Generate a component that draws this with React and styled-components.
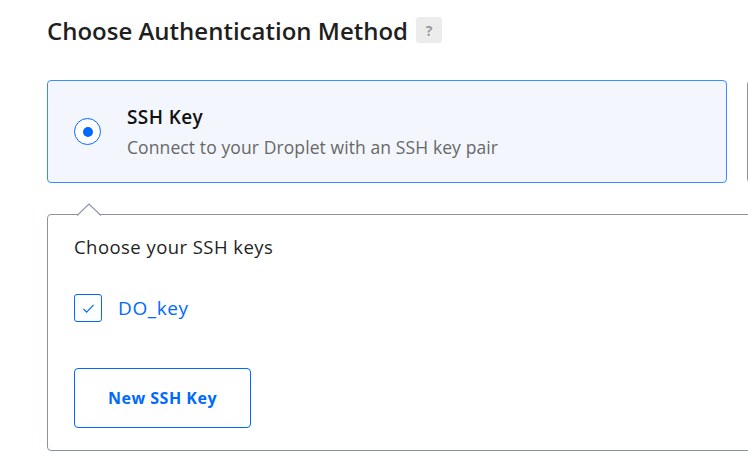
import React from 'react';
import styled, { createGlobalStyle } from 'styled-components';

const GlobalStyle = createGlobalStyle`
  html, body {
    margin: 0;
    padding: 0;
    background: #ffffff;
    overflow: hidden;
  }
  body {
    font-family: "Open Sans", Lato, sans-serif;
    color: #222222;
  }
`;

const Page = styled.div`
  width: 748px;
  height: 469px;
  overflow: hidden;
  padding: 16px 0 0 47px;
  box-sizing: border-box;
`;

const Header = styled.div`
  display: flex;
  align-items: center;
  gap: 8px;
  height: 28px;
`;

const Title = styled.h2`
  margin: 0;
  font-size: 24px;
  font-weight: 600;
  color: #1f1f1f;
`;

const HelpBadge = styled.span`
  display: inline-flex;
  align-items: center;
  justify-content: center;
  width: 26px;
  height: 26px;
  border-radius: 3px;
  background: #ececec;
  color: #9a9a9a;
  font-size: 14px;
  font-weight: 700;
`;

const MethodRow = styled.div`
  display: flex;
  gap: 20px;
  margin-top: 36px;
  width: 1400px;
`;

const MethodCard = styled.div`
  box-sizing: border-box;
  flex: 0 0 ${(p) => p.$width}px;
  height: 103px;
  border: 1px solid ${(p) => (p.$selected ? '#3a8dff' : '#8a93a6')};
  border-radius: 4px;
  background: ${(p) => (p.$selected ? '#f3f7fd' : '#ffffff')};
  display: flex;
  align-items: center;
  padding-left: 26px;
  gap: 26px;
`;

const Radio = styled.span`
  box-sizing: border-box;
  width: 27px;
  height: 27px;
  border-radius: 50%;
  border: 1.5px solid #0069ff;
  display: flex;
  align-items: center;
  justify-content: center;
  background: #ffffff;
  &::after {
    content: '';
    width: 10px;
    height: 10px;
    border-radius: 50%;
    background: #0069ff;
  }
`;

const MethodText = styled.div`
  display: flex;
  flex-direction: column;
  gap: 6px;
`;

const MethodName = styled.div`
  font-size: 19px;
  line-height: 24px;
  font-weight: 600;
  letter-spacing: 0.4px;
  color: #111111;
`;

const MethodDesc = styled.div`
  font-size: 17.5px;
  line-height: 24px;
  letter-spacing: 0.1px;
  color: #676767;
`;

const Panel = styled.div`
  position: relative;
  box-sizing: border-box;
  margin-top: 31px;
  width: 1400px;
  height: 237px;
  border: 1px solid #8a93a6;
  border-radius: 4px;
  padding: 20px 26px 0;
  background: #ffffff;
`;

const Notch = styled.svg`
  position: absolute;
  top: -12px;
  left: 29px;
`;

const PanelTitle = styled.div`
  font-size: 18.5px;
  line-height: 24px;
  letter-spacing: 0.45px;
  color: #1f1f1f;
`;

const KeyRow = styled.label`
  display: flex;
  align-items: center;
  gap: 16px;
  margin-top: 35px;
`;

const Checkbox = styled.span`
  box-sizing: border-box;
  width: 28px;
  height: 28px;
  border: 1px solid #0069ff;
  border-radius: 3px;
  display: flex;
  align-items: center;
  justify-content: center;
`;

const KeyName = styled.span`
  font-size: 19px;
  line-height: 24px;
  letter-spacing: 0.6px;
  color: #0069ff;
`;

const OutlineButton = styled.button`
  display: block;
  margin-top: 46px;
  box-sizing: border-box;
  width: 177px;
  height: 60px;
  border: 1px solid #0069ff;
  border-radius: 4px;
  background: #ffffff;
  color: #0069ff;
  font-family: inherit;
  font-size: 16px;
  font-weight: 700;
  letter-spacing: 0.5px;
`;

export default function App() {
  return (
    <>
      <GlobalStyle />
      <Page>
        <Header>
          <Title>Choose Authentication Method</Title>
          <HelpBadge>?</HelpBadge>
        </Header>
        <MethodRow>
          <MethodCard $selected $width={680}>
            <Radio />
            <MethodText>
              <MethodName>SSH Key</MethodName>
              <MethodDesc>Connect to your Droplet with an SSH key pair</MethodDesc>
            </MethodText>
          </MethodCard>
          <MethodCard $width={680} />
        </MethodRow>
        <Panel>
          <Notch width="24" height="13" viewBox="0 0 24 13">
            <path d="M0 12.5 L12 1 L24 12.5" fill="#ffffff" stroke="#8a93a6" strokeWidth="1.2" />
          </Notch>
          <PanelTitle>Choose your SSH keys</PanelTitle>
          <KeyRow>
            <Checkbox>
              <svg width="13" height="11" viewBox="0 0 14 12">
                <path d="M1.5 6.5 L5 10 L12.5 2" fill="none" stroke="#0069ff" strokeWidth="1.3" />
              </svg>
            </Checkbox>
            <KeyName>DO_key</KeyName>
          </KeyRow>
          <OutlineButton>New SSH Key</OutlineButton>
        </Panel>
      </Page>
    </>
  );
}
